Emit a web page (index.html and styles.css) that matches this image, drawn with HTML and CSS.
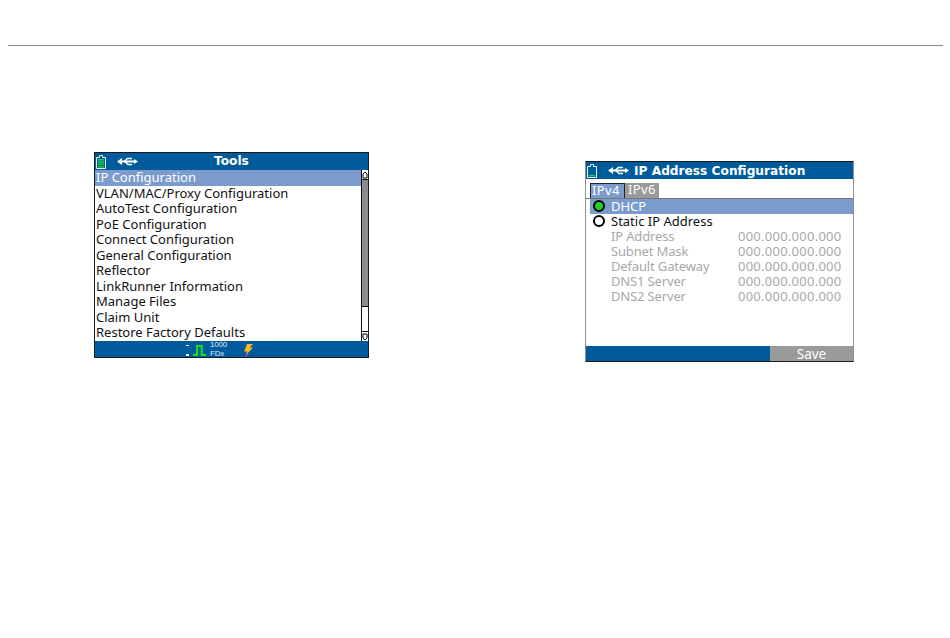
FILE: index.html
```html
<!DOCTYPE html>
<html lang="en">
<head>
<meta charset="utf-8">
<title>Tools and IP Address Configuration</title>
<link rel="stylesheet" href="styles.css">
</head>
<body>
<hr class="rule">
<main class="figures">
  <section class="screen screen-tools">
    <header class="bar bar-tools">
      <svg class="battery" width="10" height="14" viewBox="0 0 10 14"><path d="M3.500.5h3v2h3v11h-9v-11h3z" fill="none" stroke="#e8f0f8"/><path d="M2 4h6v1.500H2zM2 6.300h6v1.500H2zM2 8.600h6v1.500H2zM2 10.900h6v1.500H2z" fill="#1fd03a"/></svg>
      <svg class="usb" width="21" height="9" viewBox="0 0 21 9"><path d="M0 4.500L5 1v2.500h12V2l4 2.500L17 7V5.500H5V8z" fill="#fff"/><path d="M7 4.500L10.500 1.500H15M8 4.500L11 7.500H15" fill="none" stroke="#fff" stroke-width="1.600"/></svg>
      <span class="bar-title tools-title">Tools</span>
    </header>
    <div class="tools-body">
      <ul class="menu">
        <li class="menu-item selected">IP Configuration</li>
        <li class="menu-item">VLAN/MAC/Proxy Configuration</li>
        <li class="menu-item">AutoTest Configuration</li>
        <li class="menu-item">PoE Configuration</li>
        <li class="menu-item">Connect Configuration</li>
        <li class="menu-item">General Configuration</li>
        <li class="menu-item">Reflector</li>
        <li class="menu-item">LinkRunner Information</li>
        <li class="menu-item">Manage Files</li>
        <li class="menu-item">Claim Unit</li>
        <li class="menu-item">Restore Factory Defaults</li>
      </ul>
      <div class="scrollbar">
        <div class="arrow arrow-up"><svg width="6" height="8" viewBox="0 0 6 8"><path d="M1 7V3l2-2 2 2v4z" fill="none" stroke="#000"/></svg></div>
        <div class="thumb"></div>
        <div class="track"></div>
        <div class="arrow arrow-down"><svg width="6" height="8" viewBox="0 0 6 8"><path d="M1 1v4l2 2 2-2V1z" fill="none" stroke="#000"/></svg></div>
      </div>
    </div>
    <footer class="bar status">
      <svg class="link" width="20" height="15" viewBox="0 0 20 15"><path d="M0 3h3v1H0zM0 12h3v2H0z" fill="#fff"/><path d="M7 13h4V4h4.700v9H20" fill="none" stroke="#1be01b" stroke-width="2"/></svg>
      <span class="speed"><span>1000</span><span>FDx</span></span>
      <svg class="bolt" width="10" height="14" viewBox="0 0 10 14"><path d="M4 0h6L6.500 3.500H10L3 11l1-3.500H1L2.500 4z" fill="#f9b81c"/><path d="M3 11l-1 3 4-4.500zM1 7.500h1L1.500 9z" fill="#e02ad0"/></svg>
    </footer>
  </section>

  <section class="screen screen-ip">
    <header class="bar bar-ip">
      <svg class="battery" width="10" height="14" viewBox="0 0 10 14"><path d="M3.500.5h3v2h3v11h-9v-11h3z" fill="none" stroke="#e8f0f8"/><path d="M2 10.900h6v1.500H2z" fill="#1fd03a"/></svg>
      <svg class="usb" width="21" height="9" viewBox="0 0 21 9"><path d="M0 4.500L5 1v2.500h12V2l4 2.500L17 7V5.500H5V8z" fill="#fff"/><path d="M7 4.500L10.500 1.500H15M8 4.500L11 7.500H15" fill="none" stroke="#fff" stroke-width="1.600"/></svg>
      <span class="bar-title">IP Address Configuration</span>
    </header>
    <div class="ip-body">
      <div class="tabs">
        <span class="tab tab-active">IPv4</span>
        <span class="tab">IPv6</span>
      </div>
      <div class="radio-row selected">
        <span class="radio radio-on"></span>DHCP
      </div>
      <div class="radio-row">
        <span class="radio"></span>Static IP Address
      </div>
      <dl class="fields">
        <div class="field"><dt>IP Address</dt><dd>000.000.000.000</dd></div>
        <div class="field"><dt>Subnet Mask</dt><dd>000.000.000.000</dd></div>
        <div class="field"><dt>Default Gateway</dt><dd>000.000.000.000</dd></div>
        <div class="field"><dt>DNS1 Server</dt><dd>000.000.000.000</dd></div>
        <div class="field"><dt>DNS2 Server</dt><dd>000.000.000.000</dd></div>
      </dl>
    </div>
    <footer class="ip-footer">
      <span class="ip-footer-blank"></span>
      <span class="save">Save</span>
    </footer>
  </section>
</main>
</body>
</html>
```

FILE: styles.css
```css
* { box-sizing: border-box; }

html, body {
  margin: 0;
  padding: 0;
  background: #fff;
}

body {
  width: 950px;
  height: 638px;
  overflow: hidden;
  font-family: "Noto Sans", "Liberation Sans", sans-serif;
  font-size: 13px;
  color: #111;
}

.rule {
  margin: 45px 7px 0 8px;
  border: 0;
  height: 1px;
  background: #8c8c8c;
}

.figures {
  display: flex;
  align-items: flex-start;
  padding: 106px 0 0 94px;
}

.screen {
  background: #fff;
  display: flex;
  flex-direction: column;
}

.screen-tools {
  width: 275px;
  height: 206px;
  border: 1px solid #1a1a1a;
}

.screen-ip {
  width: 269px;
  height: 201px;
  margin: 9px 0 0 216px;
  border: 1px solid #8f8f8f;
  border-top-color: #1a1a1a;
  border-bottom-color: #1a1a1a;
}

.bar {
  background: #005b9c;
  color: #fff;
  display: flex;
  align-items: center;
  flex: none;
}

.bar-tools, .bar-ip {
  height: 17px;
  padding-left: 1px;
}

.battery { flex: none; }

.usb {
  flex: none;
  margin-left: 11px;
}

.bar-title {
  font-family: "DejaVu Sans", sans-serif;
  font-weight: 700;
  font-size: 12.200px;
  margin-left: 5px;
}

.tools-title {
  margin: 0 0 2px 76px;
}

.tools-body {
  flex: 1;
  display: flex;
  min-height: 0;
}

.menu {
  list-style: none;
  margin: 0;
  padding: 0;
  flex: 1;
}

.menu-item {
  height: 15.550px;
  line-height: 15px;
  padding-left: 1px;
  white-space: nowrap;
}

.selected {
  background: #7b9bcd;
  color: #fff;
}

.scrollbar {
  flex: none;
  width: 7px;
  display: flex;
  flex-direction: column;
  border-left: 1px solid #111;
  background: #fff;
}

.arrow {
  height: 10px;
  flex: none;
  display: flex;
  align-items: center;
  justify-content: center;
}

.arrow svg { display: block; }

.arrow-up { border-bottom: 1px solid #111; }
.arrow-down { border-top: 1px solid #111; }

.thumb {
  height: 127px;
  flex: none;
  background: #8c8c8c;
  border-bottom: 1px solid #111;
}

.track { flex: 1; }

.status {
  height: 16px;
  padding-left: 91px;
  overflow: hidden;
}

.link { flex: none; }

.speed {
  display: flex;
  flex-direction: column;
  font-family: "Liberation Sans", sans-serif;
  font-size: 8px;
  line-height: 9.500px;
  letter-spacing: -.2px;
  margin-left: 4px;
  width: 17px;
  color: #dfe9f5;
}

.bolt {
  flex: none;
  margin: 3px 0 0 16px;
}

.ip-body {
  flex: 1;
  padding-top: 4px;
}

.tabs {
  display: flex;
  height: 16px;
  padding-left: 4px;
  border-bottom: 1px solid #777;
}

.tab {
  width: 34px;
  height: 15px;
  line-height: 13px;
  padding-left: 3px;
  background: #9a9a9a;
  color: #fff;
  letter-spacing: .4px;
}

.tab-active {
  width: 35px;
  background: #7b9bcd;
  border: 1px solid #222;
  border-bottom: 0;
  padding-left: 1px;
}

.radio-row {
  height: 15px;
  line-height: 15px;
  margin-left: 4px;
  padding-left: 3px;
  display: flex;
  align-items: center;
  white-space: nowrap;
}

.radio-row + .radio-row { padding-bottom: 1px; }

.radio {
  flex: none;
  width: 12px;
  height: 12px;
  margin: 0 6px 1px 0;
  border: 2px solid #000;
  border-radius: 50%;
  background: #fff;
}

.radio-on { background: #19d02f; }

.fields {
  margin: 0;
  padding: 0 0 0 25px;
  color: #a8a8a8;
}

.field {
  display: flex;
  height: 15px;
  line-height: 14px;
}

.field dt {
  width: 127px;
  letter-spacing: -.15px;
}

.field dd {
  margin: 0;
  letter-spacing: .25px;
}

.ip-footer {
  flex: none;
  display: flex;
  height: 15px;
}

.ip-footer-blank {
  flex: 1;
  background: #005b9c;
}

.save {
  width: 83px;
  background: #9a9a9a;
  color: #fff;
  font-size: 13.500px;
  text-align: center;
  line-height: 16px;
}
```
